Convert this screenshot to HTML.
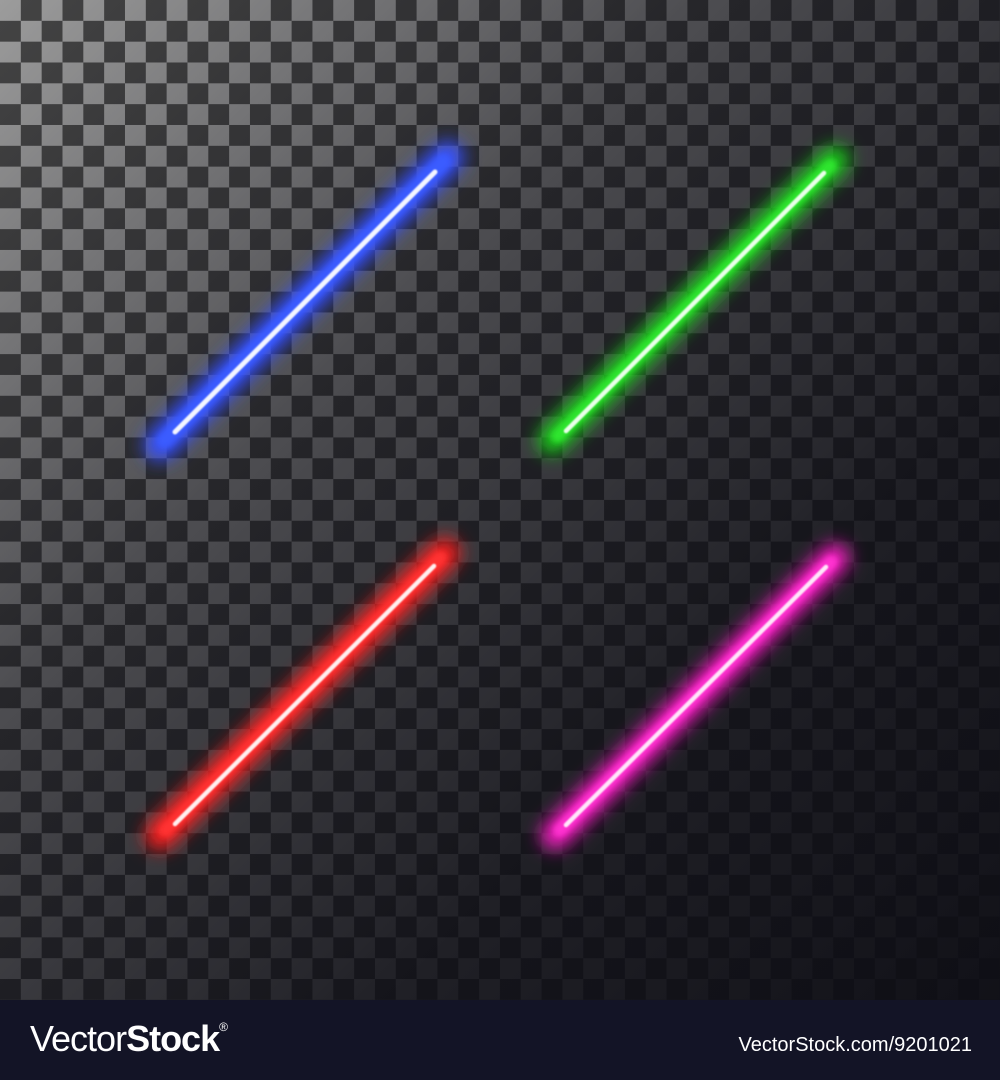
<!DOCTYPE html>
<html><head><meta charset="utf-8"><style>
html,body{margin:0;padding:0;background:#12131f;}
.wrap{position:relative;width:1000px;height:1080px;overflow:hidden;}
svg{position:absolute;left:0;top:0;}
.footer{position:absolute;left:0;top:1000px;width:1000px;height:80px;background:#131426;}
.logo{position:absolute;left:30px;top:18px;font-family:"Liberation Sans",sans-serif;font-size:36px;color:#fff;letter-spacing:-1px;}
.logo b{font-weight:bold}
.logo sup{font-size:12px;vertical-align:top;position:relative;top:2px;}
.url{position:absolute;right:28px;top:34px;font-family:"Liberation Sans",sans-serif;font-size:20px;color:#fff;}
</style></head><body><div class="wrap">
<svg width="1000" height="1000" viewBox="0 0 1000 1000">
<defs>
<pattern id="ck" width="41.66" height="41.66" patternUnits="userSpaceOnUse">
<rect width="41.66" height="41.66" fill="#9c9c9c"/>
<rect x="20.83" width="20.83" height="20.83" fill="#444"/>
<rect y="20.83" width="20.83" height="20.83" fill="#444"/>
</pattern>
<linearGradient id="ov" x1="0" y1="0" x2="1" y2="1">
<stop offset="0" stop-color="#0d0d14" stop-opacity="0"/>
<stop offset="0.35" stop-color="#0d0d14" stop-opacity="0.55"/>
<stop offset="0.7" stop-color="#0d0d14" stop-opacity="0.87"/>
<stop offset="1" stop-color="#0d0d14" stop-opacity="0.97"/>
</linearGradient>
<filter id="b1" x="-50%" y="-50%" width="200%" height="200%"><feGaussianBlur stdDeviation="9"/></filter>
<filter id="b2" x="-50%" y="-50%" width="200%" height="200%"><feGaussianBlur stdDeviation="3"/></filter>
<filter id="b3" x="-50%" y="-50%" width="200%" height="200%"><feGaussianBlur stdDeviation="0.8"/></filter>
</defs>
<rect width="1000" height="1000" fill="url(#ck)"/>
<rect width="1000" height="1000" fill="url(#ov)"/>
<g stroke-linecap="round">
<!-- blue -->
<line x1="160" y1="445" x2="448" y2="157" stroke="#3550ff" stroke-width="32" filter="url(#b1)"/>
<line x1="165" y1="440" x2="443" y2="162" stroke="#3a5cff" stroke-width="16" filter="url(#b2)"/>
<line x1="175" y1="432" x2="435" y2="172" stroke="#f4f6ff" stroke-width="5" filter="url(#b3)"/>
<!-- green -->
<line x1="552" y1="440" x2="835" y2="160" stroke="#1ed11e" stroke-width="28" filter="url(#b1)"/>
<line x1="558" y1="436" x2="830" y2="166" stroke="#2ee62e" stroke-width="13" filter="url(#b2)"/>
<line x1="566" y1="431" x2="824" y2="173" stroke="#eaffea" stroke-width="4.5" filter="url(#b3)"/>
<!-- red -->
<line x1="160" y1="835" x2="445" y2="553" stroke="#ff2020" stroke-width="30" filter="url(#b1)"/>
<line x1="166" y1="830" x2="440" y2="558" stroke="#ff3030" stroke-width="14" filter="url(#b2)"/>
<line x1="175" y1="824" x2="434" y2="566" stroke="#fff0f0" stroke-width="4.5" filter="url(#b3)"/>
<!-- pink -->
<line x1="555" y1="835" x2="835" y2="558" stroke="#ff1cc8" stroke-width="28" filter="url(#b1)"/>
<line x1="560" y1="830" x2="831" y2="562" stroke="#ff30d0" stroke-width="13" filter="url(#b2)"/>
<line x1="566" y1="825" x2="826" y2="567" stroke="#ffe6fa" stroke-width="4.5" filter="url(#b3)"/>
</g>
</svg>
<div class="footer">
<div class="logo">Vector<b>Stock</b><sup>®</sup></div>
<div class="url">VectorStock.com/9201021</div>
</div>
</div></body></html>
